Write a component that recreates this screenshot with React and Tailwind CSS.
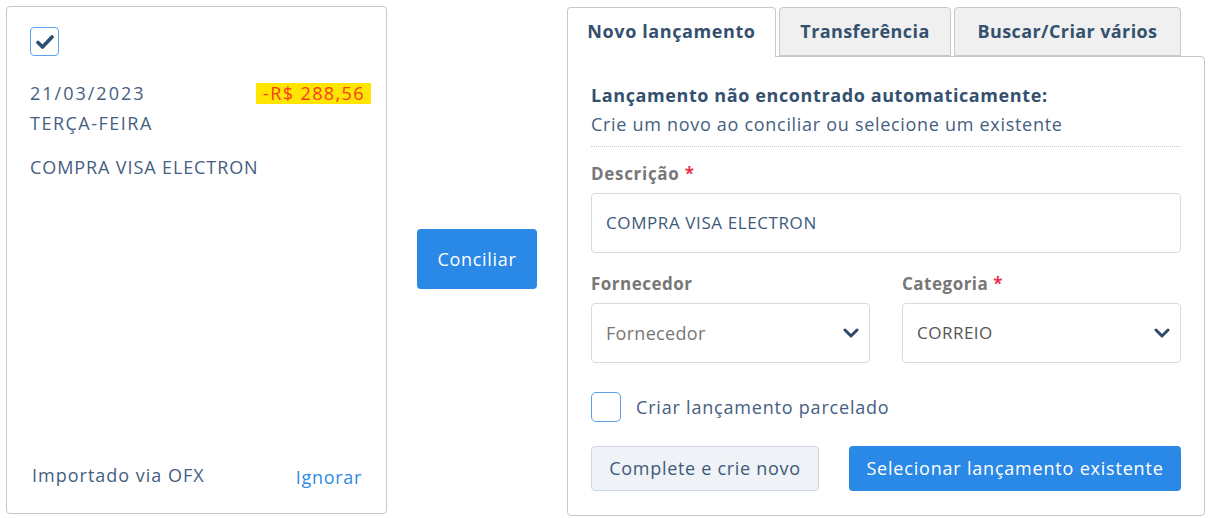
import React from "react";

const Chevron = () => (
  <svg width="16" height="12" viewBox="0 0 16 12" className="shrink-0">
    <path d="M2 3 L8 9 L14 3" fill="none" stroke="#2e4a6b" strokeWidth="3" strokeLinecap="round" strokeLinejoin="round" />
  </svg>
);

export default function App() {
  return (
    <div className="flex w-[1209px] h-[518px] bg-white pl-[6px] pt-[6px]" style={{ fontFamily: '"Open Sans", "Noto Sans", sans-serif' }}>
      {/* Left card */}
      <div className="w-[381px] h-[508px] border border-[#c8c8c8] rounded-[4px] flex flex-col pl-[23px] pr-[14px] pt-[20px] pb-[24px] text-[#45607f]">
        <div className="w-[29px] h-[29px] border border-[#5aa0ea] rounded-[4px] flex items-center justify-center">
          <svg width="18" height="16" viewBox="0 0 18 16">
            <path d="M2 8.5 L6.5 13 L16 3" fill="none" stroke="#2f4d6f" strokeWidth="3.6" strokeLinecap="round" strokeLinejoin="round" />
          </svg>
        </div>
        <div className="flex justify-between items-center mt-[25px] pr-[1px]">
          <span className="text-[18px] leading-[24px] tracking-[2px]">21/03/2023</span>
          <span className="text-[18px] leading-[21px] bg-[#ffe500] text-[#f5401f] pl-[7px] pr-[6px] tracking-[1.4px]">-R$ 288,56</span>
        </div>
        <div className="text-[18px] leading-[24px] mt-[6px] tracking-[1.5px]">TERÇA-FEIRA</div>
        <div className="text-[18px] leading-[24px] mt-[20px] tracking-[0.9px]">COMPRA VISA ELECTRON</div>
        <div className="flex-1" />
        <div className="flex justify-between items-center pl-[2px] pr-[10px]">
          <span className="text-[18px] leading-[24px] tracking-[1px]">Importado via OFX</span>
          <span className="text-[18px] leading-[24px] text-[#2f8ae5] mt-[4px] tracking-[0.7px]">Ignorar</span>
        </div>
      </div>

      {/* Middle button */}
      <div className="w-[180px] flex items-start justify-center pt-[223px]">
        <button className="w-[120px] h-[60px] bg-[#2a88e6] rounded-[4px] text-white text-[18px] tracking-[0.7px]">Conciliar</button>
      </div>

      {/* Right panel */}
      <div className="w-[638px] flex flex-col">
        <div className="flex items-end h-[50px] gap-[3px]">
          <div className="w-[209px] h-[50px] border border-b-0 border-[#c8c8c8] rounded-t-[4px] bg-white flex items-center justify-center text-[18px] font-bold text-[#34506f] relative z-10 -mb-px pb-[2px] tracking-[0.6px]">Novo lançamento</div>
          <div className="w-[172px] h-[49px] border border-[#c8c8c8] rounded-t-[4px] bg-[#f0f0f0] flex items-center justify-center text-[18px] font-bold text-[#34506f] tracking-[0.4px]">Transferência</div>
          <div className="w-[227px] h-[49px] border border-[#c8c8c8] rounded-t-[4px] bg-[#f0f0f0] flex items-center justify-center text-[18px] font-bold text-[#34506f] tracking-[0.4px]">Buscar/Criar vários</div>
        </div>
        <div className="h-[460px] border border-[#c8c8c8] rounded-b-[4px] rounded-tr-[4px] px-[23px] pt-[25px]">
          <div className="text-[18px] leading-[26px] font-bold text-[#34506f] tracking-[0.6px]">Lançamento não encontrado automaticamente:</div>
          <div className="text-[18px] leading-[26px] text-[#45607f] mt-[3px] tracking-[0.7px]">Crie um novo ao conciliar ou selecione um existente</div>
          <div className="border-t border-dotted border-[#c3cad3] mt-[9px]" />
          <div className="text-[17px] leading-[24px] font-bold text-[#777] mt-[15px] tracking-[0.7px]">
            Descrição <span className="text-[#e8334a]">*</span>
          </div>
          <div className="h-[60px] border border-[#d3dbe4] rounded-[4px] mt-[7px] flex items-center px-[14px] text-[17px] text-[#3d5a7a] tracking-[0.6px]">COMPRA VISA ELECTRON</div>
          <div className="flex gap-[32px] mt-[19px]">
            <div className="flex-1">
              <div className="text-[17px] leading-[24px] font-bold text-[#777] tracking-[0.5px]">Fornecedor</div>
              <div className="h-[60px] border border-[#d3dbe4] rounded-[4px] mt-[7px] flex items-center justify-between pl-[14px] pr-[10px] text-[18px] text-[#777] tracking-[0.3px]">
                <span>Fornecedor</span>
                <Chevron />
              </div>
            </div>
            <div className="flex-1">
              <div className="text-[17px] leading-[24px] font-bold text-[#777] tracking-[0.5px]">
                Categoria <span className="text-[#e8334a]">*</span>
              </div>
              <div className="h-[60px] border border-[#d3dbe4] rounded-[4px] mt-[7px] flex items-center justify-between pl-[14px] pr-[10px] text-[17px] text-[#555] tracking-[0.5px]">
                <span>CORREIO</span>
                <Chevron />
              </div>
            </div>
          </div>
          <div className="flex items-center mt-[29px]">
            <div className="w-[30px] h-[30px] border border-[#5aa0ea] rounded-[5px]" />
            <span className="ml-[15px] text-[18px] text-[#45607f] tracking-[0.8px]">Criar lançamento parcelado</span>
          </div>
          <div className="flex justify-between mt-[24px]">
            <button className="w-[228px] h-[45px] bg-[#eff2f7] border border-[#cfd6df] rounded-[4px] text-[18px] text-[#3d5a7a] tracking-[0.7px]">Complete e crie novo</button>
            <button className="w-[332px] h-[45px] bg-[#2a88e6] rounded-[4px] text-[18px] text-white tracking-[0.8px]">Selecionar lançamento existente</button>
          </div>
        </div>
      </div>
    </div>
  );
}
